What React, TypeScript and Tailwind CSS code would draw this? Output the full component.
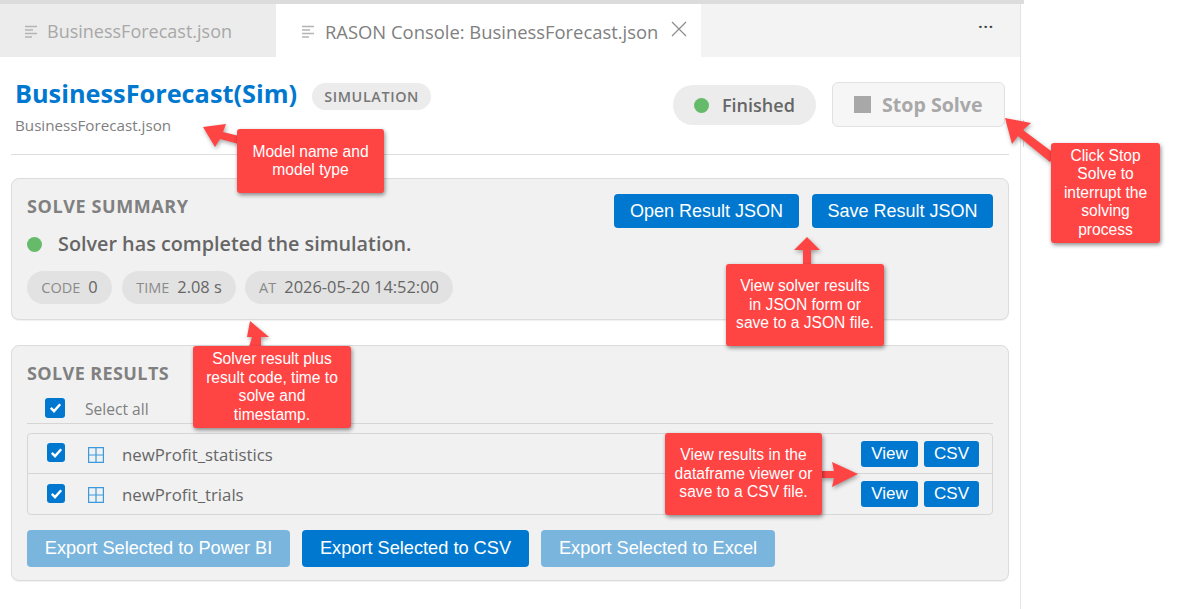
import React from 'react';

const font = "font-['Open_Sans','Noto_Sans',sans-serif]";
const arial = "font-['Liberation_Sans',Arial,sans-serif]";

function FileIcon({ className }: { className: string }) {
  return (
    <svg viewBox="0 0 14 14" className={`w-[14px] h-[14px] ${className}`} fill="none" stroke="currentColor" strokeWidth="1.5">
      <path d="M0 1.5h12M0 5h8M0 8.5h12M0 12h7" />
    </svg>
  );
}

function Check({ className }: { className: string }) {
  return (
    <span className={`flex items-center justify-center rounded-[3px] bg-[#0078d0] ${className}`}>
      <svg viewBox="0 0 16 16" className="w-[15px] h-[15px]" fill="none" stroke="white" strokeWidth="2.6">
        <path d="M3 8.5l3.4 3.4L13 4.5" />
      </svg>
    </span>
  );
}

function GridIcon() {
  return (
    <svg viewBox="0 0 16 16" className="w-[16px] h-[16px] shrink-0" fill="none" stroke="#3b9ade" strokeWidth="1.2">
      <path d="M.6.6h14.8v14.8H.6zM8 .6v14.8M.6 8h14.8" />
    </svg>
  );
}

function Chip({ label, value, className }: { label: string; value: string; className: string }) {
  return (
    <div className={`h-[33px] rounded-full bg-[#e2e2e2] flex items-center justify-center gap-[8px] ${className}`}>
      <span className="text-[14.5px] text-[#8a8a8a]">{label}</span>
      <span className="text-[16.4px] font-medium text-[#666666]">{value}</span>
    </div>
  );
}

function Row({ name, last }: { name: string; last?: boolean }) {
  return (
    <div className={`h-[40px] flex items-center pl-[19px] pr-[13px] ${last ? '' : 'border-b border-[#d6d6d6]'}`}>
      <Check className="w-[18px] h-[19px] mb-[2px]" />
      <span className="ml-[23px] pt-[2px]"><GridIcon /></span>
      <span className="ml-[18px] pt-[2px] text-[16.8px] text-[#666666]">{name}</span>
      <div className={`ml-auto flex gap-[6px] ${arial}`}>
        <button className="w-[57px] h-[26px] rounded-[3px] bg-[#0078d0] text-white text-[17px]">View</button>
        <button className="w-[55px] h-[26px] rounded-[3px] bg-[#0078d0] text-white text-[17px]">CSV</button>
      </div>
    </div>
  );
}

function Callout({ className, lines }: { className: string; lines: string[] }) {
  return (
    <div className={`absolute z-20 flex flex-col justify-center items-center rounded-[3px] bg-[#ff4444] text-white text-[15.6px] leading-[18.5px] shadow-[1px_2px_4px_rgba(0,0,0,0.45)] ${arial} ${className}`}>
      {lines.map((l) => (
        <span key={l} className="whitespace-nowrap">{l}</span>
      ))}
    </div>
  );
}

function Arrow({ className, points, w, h }: { className: string; points: string; w: number; h: number }) {
  return (
    <svg
      width={w}
      height={h}
      viewBox={`0 0 ${w} ${h}`}
      className={`absolute z-10 drop-shadow-[1px_2px_2px_rgba(0,0,0,0.35)] ${className}`}
    >
      <polygon points={points} fill="#ff4444" />
    </svg>
  );
}

export default function App() {
  return (
    <div className={`relative w-[1200px] h-[609px] overflow-hidden bg-white ${font}`}>
      <div className="h-[4px] w-[1024px] bg-[#dcdcdc]" />
      <div className="w-[1021px] h-[605px] border-r border-[#e4e4e4]">
        <div className="h-[53px] flex bg-[#f3f3f3]">
          <div className="w-[276px] bg-[#ececec] flex items-center pl-[25px] pt-[2px] gap-[8px] text-[#a8a8a8]">
            <FileIcon className="text-[#b4b4b4]" />
            <span className="text-[18px]">BusinessForecast.json</span>
          </div>
          <div className="w-[425px] bg-white flex items-center pl-[26px] pt-[2px] text-[#808080]">
            <FileIcon className="text-[#b4b4b4]" />
            <span className="ml-[9px] text-[18.4px]">RASON Console: BusinessForecast.json</span>
            <svg viewBox="0 0 16 16" className="ml-[13px] mb-[6px] w-[16px] h-[16px]" fill="none" stroke="#8c8c8c" strokeWidth="1.2">
              <path d="M1 1l14 14M15 1L1 15" />
            </svg>
          </div>
          <div className="flex-1 flex justify-end pr-[26px] pt-[12px] text-[#444444] font-bold text-[15px] leading-[20px] tracking-[1px]">
            ···
          </div>
        </div>

        <div className="pl-[11px] pr-[11px]">
          <div className="h-[98px] border-b border-[#dedede] flex justify-between pl-[4px] pr-[4px]">
            <div>
              <div className="flex items-center mt-[18px]">
                <h1 className="text-[25.3px] leading-[32px] font-bold text-[#0078d0]">BusinessForecast(Sim)</h1>
                <span className="ml-[15px] mt-[8px] w-[119px] h-[27px] rounded-full bg-[#ececec] flex items-center justify-center text-[14.4px] font-semibold tracking-[0.6px] text-[#777777]">
                  SIMULATION
                </span>
              </div>
              <p className="mt-[4px] text-[15.2px] text-[#808080]">BusinessForecast.json</p>
            </div>
            <div className="flex items-start mt-[25px]">
              <div className="mt-[3px] w-[143px] h-[40px] rounded-full bg-[#ececec] flex items-center pl-[21px]">
                <span className="w-[15px] h-[15px] rounded-full bg-[#66bb6a]" />
                <span className="ml-[13px] text-[18px] font-semibold text-[#666666]">Finished</span>
              </div>
              <button className="ml-[16px] w-[173px] h-[45px] rounded-[6px] border border-[#e2e2e2] bg-[#f6f6f6] flex items-center pl-[21px]">
                <span className="w-[17px] h-[17px] bg-[#a8a8a8]" />
                <span className="ml-[11px] text-[19.6px] font-bold text-[#a8a8a8]">Stop Solve</span>
              </button>
            </div>
          </div>

          <section className="mt-[23px] h-[142px] rounded-[8px] border border-[#dcdcdc] bg-[#f1f1f1] px-[15px] relative shadow-[0_1px_1px_rgba(0,0,0,0.06)]">
            <div className="flex justify-between">
              <div>
                <h2 className="mt-[15px] text-[18px] leading-[24px] font-bold tracking-[0.6px] text-[#808080]">SOLVE SUMMARY</h2>
                <div className="mt-[13px] flex items-center">
                  <span className="w-[15px] h-[15px] rounded-full bg-[#66bb6a]" />
                  <span className="ml-[16px] text-[19.8px] leading-[26px] font-semibold text-[#666666]">Solver has completed the simulation.</span>
                </div>
              </div>
              <div className={`mt-[15px] flex gap-[13px] ${arial}`}>
                <button className="w-[185px] h-[34px] rounded-[4px] bg-[#0078d0] text-white text-[18px]">Open Result JSON</button>
                <button className="w-[181px] h-[34px] rounded-[4px] bg-[#0078d0] text-white text-[18px]">Save Result JSON</button>
              </div>
            </div>
            <div className="mt-[14px] flex">
              <Chip label="CODE" value="0" className="w-[85px]" />
              <Chip label="TIME" value="2.08 s" className="ml-[10px] w-[114px]" />
              <Chip label="AT" value="2026-05-20 14:52:00" className="ml-[9px] w-[208px]" />
            </div>
          </section>

          <section className="mt-[25px] h-[236px] rounded-[8px] border border-[#dcdcdc] bg-[#f1f1f1] px-[15px] shadow-[0_1px_1px_rgba(0,0,0,0.06)]">
            <h2 className="mt-[15px] text-[18px] leading-[24px] font-bold tracking-[0.4px] text-[#808080]">SOLVE RESULTS</h2>
            <div className="mt-[1px] h-[38px] flex items-center border-b border-[#d6d6d6] pl-[18px] pt-[6px]">
              <Check className="w-[20px] h-[20px]" />
              <span className="ml-[20px] pt-[4px] text-[15.6px] text-[#808080]">Select all</span>
            </div>
            <div className="mt-[9px] rounded-[4px] border border-[#d6d6d6]">
              <Row name="newProfit_statistics" />
              <Row name="newProfit_trials" last />
            </div>
            <div className={`mt-[15px] flex gap-[12px] text-white text-[18.2px] ${arial}`}>
              <button className="w-[263px] h-[37px] rounded-[4px] bg-[#7ab5de]">Export Selected to Power BI</button>
              <button className="w-[227px] h-[37px] rounded-[4px] bg-[#0078d0]">Export Selected to CSV</button>
              <button className="w-[234px] h-[37px] rounded-[4px] bg-[#7ab5de]">Export Selected to Excel</button>
            </div>
          </section>
        </div>
      </div>

      <div className="absolute left-[1023px] top-[120px] w-[1px] h-[27px] bg-[#d8d8d8]" />

      <Arrow className="left-[203px] top-[124px]" w={36} h={24} points="0,3 23,0 20,8 36,12 36,20 17,15 12,23" />
      <Callout className="left-[237px] top-[129px] w-[147px] h-[64px]" lines={['Model name and', 'model type']} />

      <Arrow className="left-[1005px] top-[118px]" w={50} h={44} points="0,0 26,5 18,12 50,36 45,44 13,18 7,26" />
      <Callout className="left-[1051px] top-[143px] w-[109px] h-[100px]" lines={['Click Stop', 'Solve to', 'interrupt the', 'solving', 'process']} />

      <Arrow className="left-[794px] top-[237px]" w={26} h={28} points="13,0 26,13 17,13 17,28 9,28 9,13 0,13" />
      <Callout className="left-[726px] top-[264px] w-[158px] h-[82px]" lines={['View solver results', 'in JSON form or', 'save to a JSON file.']} />

      <Arrow className="left-[247px] top-[321px]" w={24} h={26} points="3,0 22,16 14,16 14,26 2,26 5,16 0,16" />
      <Callout className="left-[193px] top-[346px] w-[158px] h-[82px]" lines={['Solver result plus', 'result code, time to', 'solve and', 'timestamp.']} />

      <Arrow className="left-[821px] top-[462px]" w={37} h={25} points="37,12 11,25 13,16 0,16 0,9 13,9 11,0" />
      <Callout className="left-[665px] top-[433px] w-[157px] h-[82px]" lines={['View results in the', 'dataframe viewer or', 'save to a CSV file.']} />
    </div>
  );
}
